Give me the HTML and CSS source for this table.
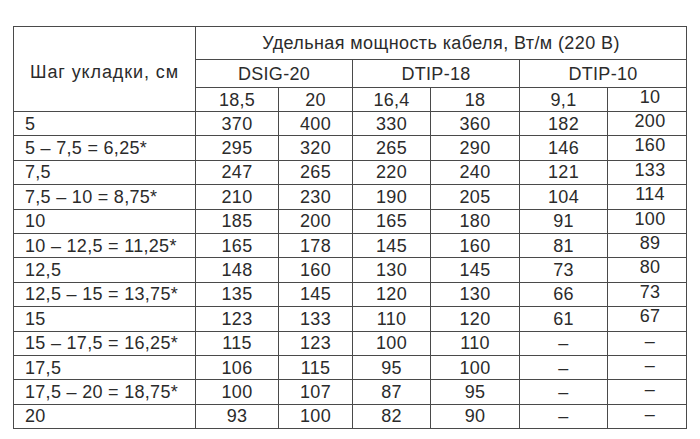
FILE: index.html
```html
<!DOCTYPE html>
<html lang="ru">
<head>
<meta charset="utf-8">
<title>Удельная мощность кабеля</title>
<link rel="stylesheet" href="styles.css">
</head>
<body>
<table class="power">
  <colgroup>
    <col class="c-step">
    <col class="c-a"><col class="c-b">
    <col class="c-c"><col class="c-d">
    <col class="c-e"><col class="c-f">
  </colgroup>
  <thead>
    <tr class="h1">
      <th rowspan="3" class="step-head">Шаг укладки, см</th>
      <th colspan="6" class="title">Удельная мощность кабеля, Вт/м (220 В)</th>
    </tr>
    <tr class="h2">
      <th colspan="2">DSIG-20</th>
      <th colspan="2">DTIP-18</th>
      <th colspan="2">DTIP-10</th>
    </tr>
    <tr class="h3">
      <th>18,5</th><th>20</th><th>16,4</th><th>18</th><th>9,1</th><th class="up">10</th>
    </tr>
  </thead>
  <tbody>
    <tr><td>5</td><td>370</td><td>400</td><td>330</td><td>360</td><td>182</td><td class="up">200</td></tr>
    <tr><td>5 – 7,5 = 6,25*</td><td>295</td><td>320</td><td>265</td><td>290</td><td>146</td><td class="up">160</td></tr>
    <tr><td>7,5</td><td>247</td><td>265</td><td>220</td><td>240</td><td>121</td><td class="up">133</td></tr>
    <tr><td>7,5 – 10 = 8,75*</td><td>210</td><td>230</td><td>190</td><td>205</td><td>104</td><td class="up">114</td></tr>
    <tr><td>10</td><td>185</td><td>200</td><td>165</td><td>180</td><td>91</td><td class="up">100</td></tr>
    <tr><td>10 – 12,5 = 11,25*</td><td>165</td><td>178</td><td>145</td><td>160</td><td>81</td><td class="up">89</td></tr>
    <tr><td>12,5</td><td>148</td><td>160</td><td>130</td><td>145</td><td>73</td><td class="up">80</td></tr>
    <tr><td>12,5 – 15 = 13,75*</td><td>135</td><td>145</td><td>120</td><td>130</td><td>66</td><td class="up">73</td></tr>
    <tr><td>15</td><td>123</td><td>133</td><td>110</td><td>120</td><td>61</td><td class="up">67</td></tr>
    <tr><td>15 – 17,5 = 16,25*</td><td>115</td><td>123</td><td>100</td><td>110</td><td>–</td><td class="up">–</td></tr>
    <tr><td>17,5</td><td>106</td><td>115</td><td>95</td><td>100</td><td>–</td><td class="up">–</td></tr>
    <tr><td>17,5 – 20 = 18,75*</td><td>100</td><td>107</td><td>87</td><td>95</td><td>–</td><td class="up">–</td></tr>
    <tr><td>20</td><td>93</td><td>100</td><td>82</td><td>90</td><td>–</td><td class="up">–</td></tr>
  </tbody>
</table>
</body>
</html>
```
FILE: styles.css
```css
html, body {
  margin: 0;
  background: #fff;
}
body {
  padding: 26px 0 0 13px;
  font-family: "Liberation Sans", Arial, sans-serif;
  font-size: 18px;
  color: #2b2b2b;
}
.power {
  border-collapse: collapse;
  table-layout: fixed;
  width: 673px;
}
.c-step { width: 182px; }
.c-a { width: 83px; }
.c-b { width: 74px; }
.c-c { width: 78px; }
.c-d { width: 89px; }
.c-e { width: 88px; }
.c-f { width: 79px; }

.power th, .power td {
  border: 1px solid #4a4a4a;
  padding: 0;
  font-weight: normal;
  text-align: center;
  vertical-align: middle;
  line-height: 18px;
  letter-spacing: 0.3px;
  white-space: nowrap;
}
.power .step-head {
  padding-top: 6px;
  letter-spacing: 0.9px;
}
.power .title {
  letter-spacing: 0.4px;
}
.h1 { height: 33px; }
.h2 { height: 28px; }
.h3 { height: 24px; }
.power tbody tr { height: 24.4px; }
.power tbody td:first-child {
  text-align: left;
  padding-left: 11px;
}
.power .up {
  vertical-align: top;
  padding-left: 6px;
}
```
